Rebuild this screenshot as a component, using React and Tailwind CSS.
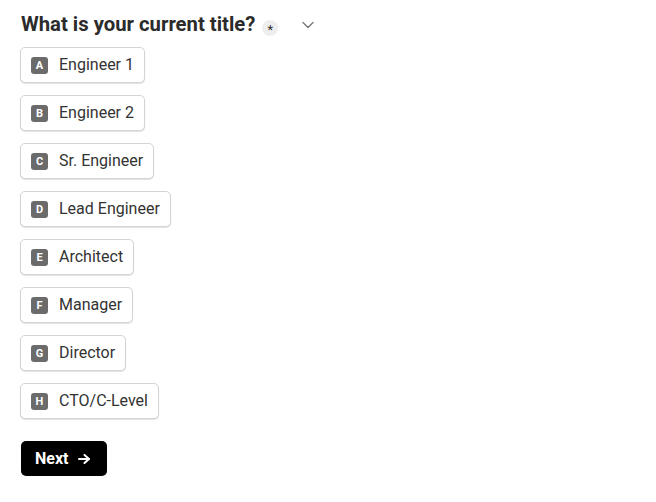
import React, { useState } from 'react';

const options = [
  { key: 'A', label: 'Engineer 1' },
  { key: 'B', label: 'Engineer 2' },
  { key: 'C', label: 'Sr. Engineer' },
  { key: 'D', label: 'Lead Engineer' },
  { key: 'E', label: 'Architect' },
  { key: 'F', label: 'Manager' },
  { key: 'G', label: 'Director' },
  { key: 'H', label: 'CTO/C-Level' },
];

const App = () => {
  const [selected, setSelected] = useState(null);

  return (
    <div className="min-h-screen bg-white px-5 pt-[10px] font-['Roboto',sans-serif] text-[#333333]">
      {/* Question header */}
      <div className="flex items-center h-[28px]">
        <h1 className="ml-px text-[20.3px] font-bold leading-[28px] text-[#2b2b2b]">
          What is your current title?
        </h1>
        <span className="ml-[7px] mt-[7px] flex h-4 w-4 items-center justify-center rounded-full bg-[#eeeeee] pt-[3px] text-[13px] leading-none text-[#333]">
          *
        </span>
        <svg className="ml-[20px] mt-[2px] text-[#777777]" width="20" height="20" viewBox="0 0 24 24" fill="none" stroke="currentColor" strokeWidth="1.6" strokeLinecap="round" strokeLinejoin="round">
          <path d="m6 9 6 6 6-6" />
        </svg>
      </div>

      {/* Options */}
      <div className="mt-[9px] flex flex-col items-start gap-3">
        {options.map((opt) => (
          <button
            key={opt.key}
            onClick={() => setSelected(opt.key)}
            className={`flex h-9 items-center gap-[11px] rounded-[5px] border bg-white pl-[10px] pr-[10px] shadow-[0_1px_1px_rgba(0,0,0,0.12)] ${
              selected === opt.key ? 'border-[#555]' : 'border-[#d4d4d4]'
            }`}
          >
            <span className="flex h-[17px] w-[17px] items-center justify-center rounded-[3px] bg-[#6b6b6b] text-[11px] font-bold leading-none text-white">
              {opt.key}
            </span>
            <span className="text-[16px] leading-none">{opt.label}</span>
          </button>
        ))}
      </div>

      {/* Next */}
      <button className="mt-[22px] ml-px flex h-[35px] w-[86px] items-center gap-[10px] rounded-[5px] bg-black pl-[14px] text-[16px] font-bold text-white">
        Next
        <svg width="12" height="10" viewBox="0 0 12 10" fill="none" stroke="currentColor" strokeWidth="2" strokeLinecap="round" strokeLinejoin="round">
          <path d="M1 5h10" />
          <path d="M6.5 1 11 5 6.5 9" />
        </svg>
      </button>
    </div>
  );
};

export default App;
